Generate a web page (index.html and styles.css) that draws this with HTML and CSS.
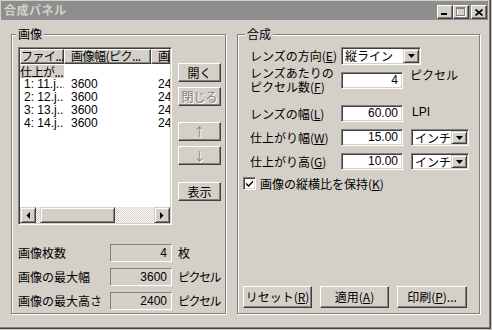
FILE: index.html
```html
<!DOCTYPE html>
<html lang="ja">
<head>
  <meta charset="UTF-8" />
  <title>合成パネル</title>
  <link rel="stylesheet" href="styles.css">
</head>
<body>

<div class="window">
  <div class="titlebar">
    <span class="title">合成パネル</span>
    <div class="caption-buttons">
      <span class="cap-btn">
        <svg width="8" height="8" viewBox="0 0 8 8"><rect x="0" y="5" width="6" height="2" fill="#000"/></svg>
      </span>
      <span class="cap-btn">
        <svg width="10" height="10" viewBox="0 0 10 10">
          <rect x="1.5" y="1.5" width="8" height="8" fill="none" stroke="#fff"/>
          <rect x="0.5" y="0.5" width="8" height="8" fill="none" stroke="#808080"/>
          <line x1="0" y1="1.5" x2="9" y2="1.5" stroke="#808080"/>
        </svg>
      </span>
      <span class="cap-btn close-btn">
        <svg width="8" height="7" viewBox="0 0 8 7"><path d="M0.5 0.5L7.5 6.5M7.5 0.5L0.5 6.5" stroke="#000" stroke-width="1.6"/></svg>
      </span>
    </div>
  </div>

  <div class="client">
    <fieldset class="group group-images">
      <legend>画像</legend>
      <div class="list-area">
        <div class="listview">
          <div class="lv-header">
            <span class="lv-head c1">ファイ...</span>
            <span class="lv-head c2">画像幅(ピク...</span>
            <span class="lv-head c3">画</span>
          </div>
          <div class="lv-body">
            <div class="lv-row"><span class="cell c1 selected">仕上が...</span></div>
            <div class="lv-row"><span class="cell c1">1: 11.j...</span><span class="cell c2">3600</span><span class="cell c3">24</span></div>
            <div class="lv-row"><span class="cell c1">2: 12.j...</span><span class="cell c2">3600</span><span class="cell c3">24</span></div>
            <div class="lv-row"><span class="cell c1">3: 13.j...</span><span class="cell c2">3600</span><span class="cell c3">24</span></div>
            <div class="lv-row"><span class="cell c1">4: 14.j...</span><span class="cell c2">3600</span><span class="cell c3">24</span></div>
          </div>
          <div class="hscroll">
            <span class="sb-btn"><svg width="4" height="7" viewBox="0 0 4 7"><path d="M4 0V7L0.5 3.5Z" fill="#000"/></svg></span>
            <span class="sb-track"><span class="sb-thumb"></span></span>
            <span class="sb-btn"><svg width="4" height="7" viewBox="0 0 4 7"><path d="M0 0V7L3.5 3.5Z" fill="#000"/></svg></span>
          </div>
        </div>
        <div class="side-buttons">
          <button class="btn side-btn">開く</button>
          <button class="btn side-btn disabled btn-close">閉じる</button>
          <button class="btn side-btn disabled btn-up">↑</button>
          <button class="btn side-btn disabled btn-down">↓</button>
          <button class="btn side-btn btn-show">表示</button>
        </div>
      </div>

      <div class="info-row first">
        <span class="info-label">画像枚数</span>
        <span class="readout">4</span>
        <span class="unit">枚</span>
      </div>
      <div class="info-row">
        <span class="info-label">画像の最大幅</span>
        <span class="readout">3600</span>
        <span class="unit">ピクセル</span>
      </div>
      <div class="info-row">
        <span class="info-label">画像の最大高さ</span>
        <span class="readout">2400</span>
        <span class="unit">ピクセル</span>
      </div>
    </fieldset>

    <fieldset class="group group-compose">
      <legend>合成</legend>

      <div class="field-row row-direction">
        <span class="field-label">レンズの方向(<u>E</u>)</span>
        <span class="combo combo-wide"><span class="combo-text">縦ライン</span><span class="combo-btn"><svg width="7" height="4" viewBox="0 0 7 4"><path d="M0 0H7L3.5 4Z" fill="#000"/></svg></span></span>
      </div>
      <div class="field-row row-pixels">
        <span class="field-label">レンズあたりの<br>ピクセル数(<u>F</u>)</span>
        <span class="edit">4</span>
        <span class="unit">ピクセル</span>
      </div>
      <div class="field-row row-gap">
        <span class="field-label">レンズの幅(<u>L</u>)</span>
        <span class="edit">60.00</span>
        <span class="unit unit-lpi">LPI</span>
      </div>
      <div class="field-row row-small">
        <span class="field-label">仕上がり幅(<u>W</u>)</span>
        <span class="edit">15.00</span>
        <span class="combo combo-unit"><span class="combo-text">インチ</span><span class="combo-btn"><svg width="7" height="4" viewBox="0 0 7 4"><path d="M0 0H7L3.5 4Z" fill="#000"/></svg></span></span>
      </div>
      <div class="field-row row-small">
        <span class="field-label">仕上がり高(<u>G</u>)</span>
        <span class="edit">10.00</span>
        <span class="combo combo-unit"><span class="combo-text">インチ</span><span class="combo-btn"><svg width="7" height="4" viewBox="0 0 7 4"><path d="M0 0H7L3.5 4Z" fill="#000"/></svg></span></span>
      </div>

      <label class="check-row">
        <span class="checkbox"><svg width="7" height="7" viewBox="0 0 7 7"><path d="M0 2.5L2.5 5L7 0.5V2.5L2.5 7L0 4.5Z" fill="#000"/></svg></span>
        <span>画像の縦横比を保持(<u>K</u>)</span>
      </label>

      <div class="action-row">
        <button class="btn action-btn">リセット(<u>R</u>)</button>
        <button class="btn action-btn">適用(<u>A</u>)</button>
        <button class="btn action-btn wide">印刷(<u>P</u>)...</button>
      </div>
    </fieldset>
  </div>
</div>

</body>
</html>
```

FILE: styles.css
```css
* {
  box-sizing: border-box;
}
body {
  margin: 0;
  background: #d4d0c8;
  font-family: 'Liberation Sans', 'Noto Sans CJK JP', sans-serif;
  font-size: 12px;
  line-height: 14px;
  color: #000;
}
u {
  text-decoration: underline;
}

/* window frame */
.window {
  width: 491px;
  height: 329px;
  padding: 1px 3px 0 1px;
  background: #d4d0c8;
  box-shadow: inset -1px -1px 0 #404040, inset -2px -2px 0 #808080;
}
.titlebar {
  height: 19px;
  background: #8e8e8e;
  display: flex;
  justify-content: space-between;
  align-items: flex-end;
  padding: 0 1px 1px 3px;
}
.title {
  align-self: center;
  color: #d4d0c8;
  font-weight: bold;
  letter-spacing: 0.5px;
  font-family: 'Noto Sans CJK JP', sans-serif;
}
.caption-buttons {
  display: flex;
}
.cap-btn {
  width: 16px;
  height: 14px;
  display: flex;
  align-items: center;
  justify-content: center;
  background: #d4d0c8;
  border: 1px solid;
  border-color: #fff #404040 #404040 #fff;
  box-shadow: inset -1px -1px 0 #808080;
}
.close-btn {
  margin-left: 2px;
}

/* client area */
.client {
  display: flex;
  gap: 11px;
  padding: 7px 0 0 10px;
}
.group {
  margin: 0;
  min-width: 0;
  height: 287px;
  border: 1px solid #808080;
  box-shadow: 1px 1px 0 #fff, inset 1px 1px 0 #fff;
}
.group legend {
  padding: 0 2px;
  background: #d4d0c8;
  line-height: 14px;
  font-family: 'Noto Sans CJK JP', sans-serif;
}
.group-images {
  width: 215px;
  padding: 6px 0 3px 6px;
}
.group-images legend {
  margin-left: -2px;
}
.group-compose {
  width: 243px;
  padding: 6px 3px 3px 5px;
}
.group-compose legend {
  margin-left: 2px;
}

/* list view */
.list-area {
  display: flex;
}
.listview {
  width: 154px;
  height: 178px;
  flex: none;
  display: flex;
  flex-direction: column;
  background: #fff;
  border: 1px solid;
  border-color: #808080 #fff #fff #808080;
  box-shadow: inset 1px 1px 0 #404040, inset -1px -1px 0 #d4d0c8;
  padding: 1px;
  overflow: hidden;
}
.lv-header {
  display: flex;
  height: 15px;
  flex: none;
}
.lv-head {
  background: #d4d0c8;
  border: 1px solid;
  border-color: #fff #404040 #404040 #fff;
  box-shadow: inset -1px -1px 0 #808080;
  line-height: 12px;
  letter-spacing: -0.5px;
  white-space: nowrap;
  overflow: hidden;
  font-family: 'Noto Sans CJK JP', sans-serif;
}
.c1 {
  width: 44px;
  flex: none;
}
.c2 {
  width: 87px;
  flex: none;
  padding-left: 6px;
}
.c3 {
  flex: 1;
  padding-left: 6px;
}
.lv-head.c1 {
  padding-left: 0;
}
.lv-body {
  flex: 1;
  padding-top: 1px;
}
.lv-row {
  display: flex;
  height: 13px;
  line-height: 13px;
}
.cell {
  white-space: nowrap;
  overflow: hidden;
}
.cell.c1 {
  padding-left: 4px;
}
.cell.c2,
.cell.c3 {
  padding-left: 7px;
}
.cell.selected {
  background: #d4d0c8;
  padding-left: 0;
  letter-spacing: -0.5px;
  font-family: 'Noto Sans CJK JP', sans-serif;
}
.hscroll {
  display: flex;
  height: 16px;
  flex: none;
}
.sb-btn {
  width: 16px;
  height: 16px;
  display: flex;
  align-items: center;
  justify-content: center;
  background: #d4d0c8;
  border: 1px solid;
  border-color: #d4d0c8 #404040 #404040 #d4d0c8;
  box-shadow: inset 1px 1px 0 #fff, inset -1px -1px 0 #808080;
}
.sb-track {
  flex: 1;
  padding-left: 4px;
  background: repeating-conic-gradient(#d4d0c8 0 25%, #fff 0 50%) 0 0 / 2px 2px;
}
.sb-thumb {
  display: block;
  width: 75px;
  height: 16px;
  background: #d4d0c8;
  border: 1px solid;
  border-color: #d4d0c8 #404040 #404040 #d4d0c8;
  box-shadow: inset 1px 1px 0 #fff, inset -1px -1px 0 #808080;
}

/* buttons */
.btn {
  margin: 0;
  padding: 0;
  font: inherit;
  font-family: 'Noto Sans CJK JP', sans-serif;
  color: #000;
  background: #d4d0c8;
  border: 1px solid;
  border-color: #fff #404040 #404040 #fff;
  box-shadow: inset -1px -1px 0 #808080;
  display: flex;
  align-items: center;
  justify-content: center;
  white-space: nowrap;
}
.btn.disabled {
  color: #808080;
  text-shadow: 1px 1px 0 #fff;
}
.side-buttons {
  display: flex;
  flex-direction: column;
  margin-left: 6px;
  padding-top: 16px;
}
.side-btn {
  width: 43px;
  height: 19px;
}
.btn-close {
  margin-top: 5px;
}
.btn-up {
  margin-top: 16px;
}
.btn-down {
  margin-top: 5px;
}
.btn-show {
  margin-top: 17px;
}

/* info rows */
.info-row {
  display: flex;
  align-items: center;
  height: 18px;
  margin-top: 6px;
  white-space: nowrap;
  font-family: 'Noto Sans CJK JP', sans-serif;
}
.info-row.first {
  margin-top: 19px;
}
.info-label {
  width: 92px;
  flex: none;
}
.readout {
  width: 62px;
  height: 18px;
  flex: none;
  line-height: 16px;
  text-align: right;
  padding-right: 4px;
  border: 1px solid;
  border-color: #808080 #fff #fff #808080;
  font-family: 'Liberation Sans', sans-serif;
}
.unit {
  margin-left: 6px;
  white-space: nowrap;
}
.info-row .unit {
  letter-spacing: -1.5px;
}

/* compose fields */
.field-row {
  display: flex;
  align-items: center;
  padding-left: 7px;
  font-family: 'Noto Sans CJK JP', sans-serif;
}
.row-direction {
  height: 18px;
}
.row-pixels {
  height: 28px;
  margin-top: 1px;
}
.row-gap {
  height: 17px;
  margin-top: 11px;
}
.row-small {
  height: 17px;
  margin-top: 7px;
}
.field-label {
  width: 91px;
  flex: none;
  white-space: nowrap;
}
.edit,
.combo {
  height: 17px;
  flex: none;
  background: #fff;
  border: 1px solid;
  border-color: #808080 #fff #fff #808080;
  box-shadow: inset 1px 1px 0 #404040, inset -1px -1px 0 #d4d0c8;
}
.edit {
  width: 62px;
  line-height: 15px;
  text-align: right;
  padding-right: 4px;
  font-family: 'Liberation Sans', sans-serif;
}
.row-pixels .unit,
.row-gap .unit {
  margin-left: 7px;
  align-self: flex-start;
}
.row-pixels .unit {
  margin-top: 2px;
}
.unit-lpi {
  margin-left: 9px !important;
  font-family: 'Liberation Sans', sans-serif;
}
.combo {
  display: flex;
  padding: 1px;
}
.combo-wide {
  width: 80px;
  height: 18px;
}
.combo-unit {
  width: 58px;
  margin-left: 8px;
}
.combo-text {
  flex: 1;
  padding-left: 2px;
  line-height: 14px;
  white-space: nowrap;
  overflow: hidden;
}
.combo-btn {
  width: 16px;
  flex: none;
  display: flex;
  align-items: center;
  justify-content: center;
  background: #d4d0c8;
  border: 1px solid;
  border-color: #d4d0c8 #404040 #404040 #d4d0c8;
  box-shadow: inset 1px 1px 0 #fff, inset -1px -1px 0 #808080;
}

.check-row {
  display: flex;
  align-items: center;
  gap: 4px;
  height: 13px;
  margin-top: 7px;
  font-family: 'Noto Sans CJK JP', sans-serif;
}
.checkbox {
  width: 13px;
  height: 13px;
  display: flex;
  align-items: center;
  justify-content: center;
  background: #fff;
  border: 1px solid;
  border-color: #808080 #fff #fff #808080;
  box-shadow: inset 1px 1px 0 #404040, inset -1px -1px 0 #d4d0c8;
}

.action-row {
  display: flex;
  gap: 8px;
  margin-top: 96px;
}
.action-btn {
  width: 69px;
  height: 22px;
}
.action-btn.wide {
  width: 70px;
}
```
